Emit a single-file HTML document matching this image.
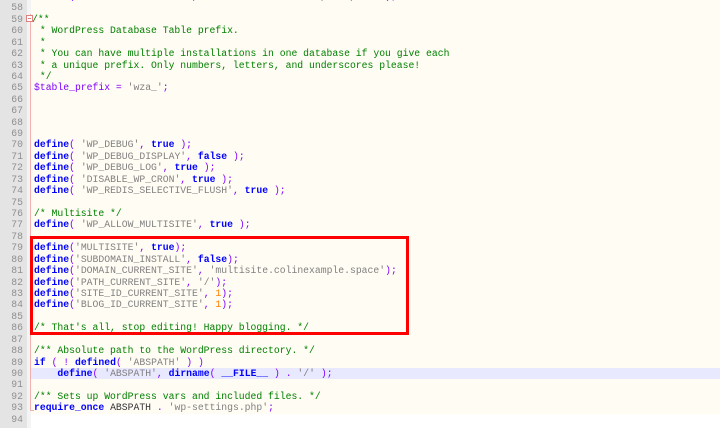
<!DOCTYPE html>
<html><head><meta charset="utf-8"><style>
html,body{margin:0;padding:0;width:720px;height:428px;overflow:hidden;background:#fff;}
#wrap{position:relative;width:720px;height:428px;overflow:hidden;}
.gut{position:absolute;left:0;top:0;width:27px;height:428px;background:#e4e4e4;}
.fold{position:absolute;left:27px;top:0;width:4px;height:428px;background:#f4f4f4;}
.pink{position:absolute;left:30px;top:0;width:1px;height:321px;background:#f2b0b0;}
.code{position:absolute;left:0;top:-9px;font-family:"Liberation Mono","Courier New","Cousine","DejaVu Sans Mono",monospace;font-size:9.75px;}
.code span{font-family:"Liberation Mono","Courier New","Cousine","DejaVu Sans Mono",monospace;}
.l{height:11.43px;line-height:11.43px;white-space:pre;position:relative;width:720px;}
.n{position:absolute;left:0;width:23px;text-align:right;color:#8f8f8f;}
.t{position:absolute;left:34px;color:#000;}
.bg{position:absolute;left:31px;right:0;top:0;bottom:0;background:#fffcf3;}
.hl .bg{background:#e8e8ff;}
.k{color:#0000ff;font-weight:bold;}
.s{color:#808080;}
.p{color:#8000ff;}
.c{color:#008000;}
.d{color:#ff8000;}
.v{color:#8000ff;}
.box{position:absolute;left:30px;top:236px;width:373px;height:93px;border:3px solid #ff0000;}
</style></head><body><div id="wrap">
<div class="gut"></div><div class="fold"></div>
<div class="code">
<div class="l"><div class="bg"></div><span class="n">57</span><span class="t"><span class="k">define</span><span class="p">(</span> <span class="s">'WP_CACHE_KEY_SALT'</span><span class="p">,</span> <span class="s">'multisite.colinexample.space'</span> <span class="p">);</span></span></div>
<div class="l"><div class="bg"></div><span class="n">58</span></div>
<div class="l"><div class="bg"></div><span class="n">59</span><span class="t" style="left:32px"><span class="c">/**</span></span></div>
<div class="l"><div class="bg"></div><span class="n">60</span><span class="t c"> * WordPress Database Table prefix.</span></div>
<div class="l"><div class="bg"></div><span class="n">61</span><span class="t c"> *</span></div>
<div class="l"><div class="bg"></div><span class="n">62</span><span class="t c"> * You can have multiple installations in one database if you give each</span></div>
<div class="l"><div class="bg"></div><span class="n">63</span><span class="t c"> * a unique prefix. Only numbers, letters, and underscores please!</span></div>
<div class="l"><div class="bg"></div><span class="n">64</span><span class="t c"> */</span></div>
<div class="l"><div class="bg"></div><span class="n">65</span><span class="t"><span class="v">$table_prefix</span> <span class="p">=</span> <span class="s">'wza_'</span><span class="p">;</span></span></div>
<div class="l"><div class="bg"></div><span class="n">66</span></div>
<div class="l"><div class="bg"></div><span class="n">67</span></div>
<div class="l"><div class="bg"></div><span class="n">68</span></div>
<div class="l"><div class="bg"></div><span class="n">69</span></div>
<div class="l"><div class="bg"></div><span class="n">70</span><span class="t"><span class="k">define</span><span class="p">(</span> <span class="s">'WP_DEBUG'</span><span class="p">,</span> <span class="k">true</span> <span class="p">);</span></span></div>
<div class="l"><div class="bg"></div><span class="n">71</span><span class="t"><span class="k">define</span><span class="p">(</span> <span class="s">'WP_DEBUG_DISPLAY'</span><span class="p">,</span> <span class="k">false</span> <span class="p">);</span></span></div>
<div class="l"><div class="bg"></div><span class="n">72</span><span class="t"><span class="k">define</span><span class="p">(</span> <span class="s">'WP_DEBUG_LOG'</span><span class="p">,</span> <span class="k">true</span> <span class="p">);</span></span></div>
<div class="l"><div class="bg"></div><span class="n">73</span><span class="t"><span class="k">define</span><span class="p">(</span> <span class="s">'DISABLE_WP_CRON'</span><span class="p">,</span> <span class="k">true</span> <span class="p">);</span></span></div>
<div class="l"><div class="bg"></div><span class="n">74</span><span class="t"><span class="k">define</span><span class="p">(</span> <span class="s">'WP_REDIS_SELECTIVE_FLUSH'</span><span class="p">,</span> <span class="k">true</span> <span class="p">);</span></span></div>
<div class="l"><div class="bg"></div><span class="n">75</span></div>
<div class="l"><div class="bg"></div><span class="n">76</span><span class="t c">/* Multisite */</span></div>
<div class="l"><div class="bg"></div><span class="n">77</span><span class="t"><span class="k">define</span><span class="p">(</span> <span class="s">'WP_ALLOW_MULTISITE'</span><span class="p">,</span> <span class="k">true</span> <span class="p">);</span></span></div>
<div class="l"><div class="bg"></div><span class="n">78</span></div>
<div class="l"><div class="bg"></div><span class="n">79</span><span class="t"><span class="k">define</span><span class="p">(</span><span class="s">'MULTISITE'</span><span class="p">,</span> <span class="k">true</span><span class="p">);</span></span></div>
<div class="l"><div class="bg"></div><span class="n">80</span><span class="t"><span class="k">define</span><span class="p">(</span><span class="s">'SUBDOMAIN_INSTALL'</span><span class="p">,</span> <span class="k">false</span><span class="p">);</span></span></div>
<div class="l"><div class="bg"></div><span class="n">81</span><span class="t"><span class="k">define</span><span class="p">(</span><span class="s">'DOMAIN_CURRENT_SITE'</span><span class="p">,</span> <span class="s">'multisite.colinexample.space'</span><span class="p">);</span></span></div>
<div class="l"><div class="bg"></div><span class="n">82</span><span class="t"><span class="k">define</span><span class="p">(</span><span class="s">'PATH_CURRENT_SITE'</span><span class="p">,</span> <span class="s">'/'</span><span class="p">);</span></span></div>
<div class="l"><div class="bg"></div><span class="n">83</span><span class="t"><span class="k">define</span><span class="p">(</span><span class="s">'SITE_ID_CURRENT_SITE'</span><span class="p">,</span> <span class="d">1</span><span class="p">);</span></span></div>
<div class="l"><div class="bg"></div><span class="n">84</span><span class="t"><span class="k">define</span><span class="p">(</span><span class="s">'BLOG_ID_CURRENT_SITE'</span><span class="p">,</span> <span class="d">1</span><span class="p">);</span></span></div>
<div class="l"><div class="bg"></div><span class="n">85</span></div>
<div class="l"><div class="bg"></div><span class="n">86</span><span class="t c">/* That's all, stop editing! Happy blogging. */</span></div>
<div class="l"><div class="bg"></div><span class="n">87</span></div>
<div class="l"><div class="bg"></div><span class="n">88</span><span class="t c">/** Absolute path to the WordPress directory. */</span></div>
<div class="l"><div class="bg"></div><span class="n">89</span><span class="t"><span class="k">if</span> <span class="p">(</span> <span class="p">!</span> <span class="k">defined</span><span class="p">(</span> <span class="s">'ABSPATH'</span> <span class="p">)</span> <span class="p">)</span></span></div>
<div class="l hl"><div class="bg"></div><span class="n">90</span><span class="t">    <span class="k">define</span><span class="p">(</span> <span class="s">'ABSPATH'</span><span class="p">,</span> <span class="k">dirname</span><span class="p">(</span> <span class="k">__FILE__</span> <span class="p">)</span> <span class="p">.</span> <span class="s">'/'</span> <span class="p">);</span></span></div>
<div class="l"><div class="bg"></div><span class="n">91</span></div>
<div class="l"><div class="bg"></div><span class="n">92</span><span class="t c">/** Sets up WordPress vars and included files. */</span></div>
<div class="l"><div class="bg"></div><span class="n">93</span><span class="t"><span class="k">require_once</span> <span style="color:#333">ABSPATH</span> <span class="p">.</span> <span class="s">'wp-settings.php'</span><span class="p">;</span></span></div>
<div class="l"><span class="n">94</span></div>
</div>
<div class="pink" style="top:14px;height:397px;"></div>
<div style="position:absolute;left:30px;top:410px;width:4px;height:1px;background:#f2b0b0"></div>
<div style="position:absolute;left:26px;top:15px;width:7px;height:7px;border:1px solid #e08080;box-sizing:border-box;background:#fff"></div>
<div style="position:absolute;left:28px;top:18px;width:3px;height:1px;background:#e08080"></div>
<div class="box"></div>
</div></body></html>
